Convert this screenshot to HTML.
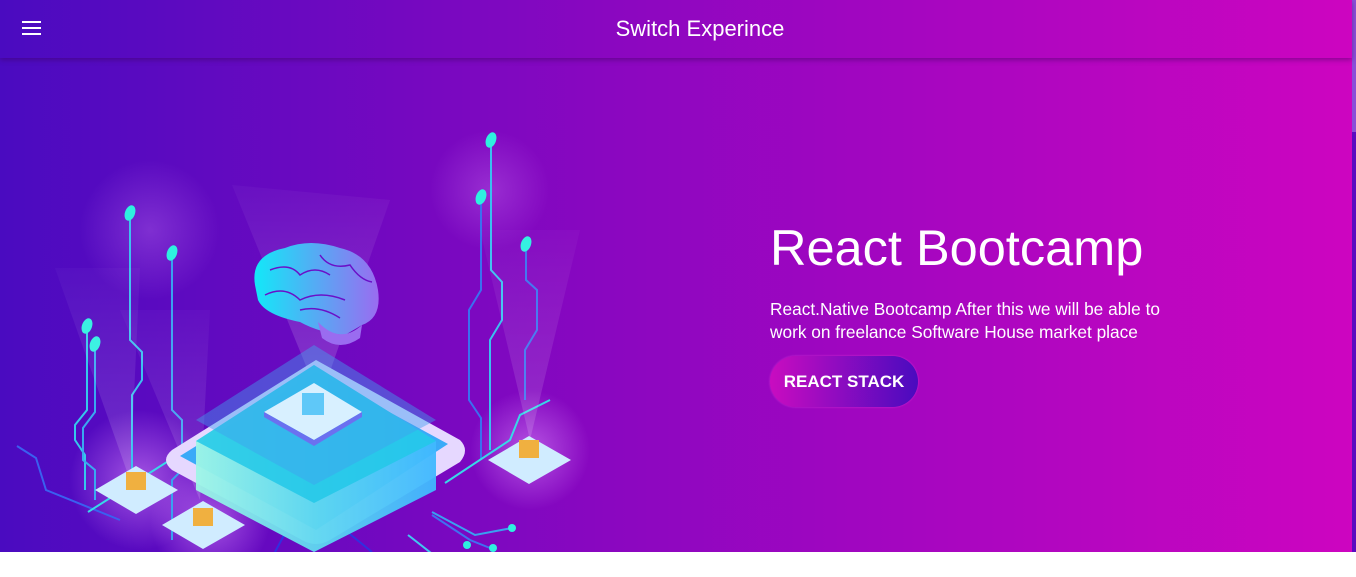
<!DOCTYPE html>
<html><head><meta charset="utf-8"><style>
html,body{margin:0;padding:0;width:1356px;height:577px;overflow:hidden;background:#fff;font-family:"Liberation Sans",Arial,sans-serif}
.hero{position:absolute;left:0;top:0;width:1352px;height:552px;background:linear-gradient(90deg,#4a0bc0 0%,#8a07c0 45%,#cd05c0 100%)}
.hdr{position:absolute;left:0;top:0;width:1352px;height:58px;background:linear-gradient(90deg,#4a0bc0 0%,#8a07c0 45%,#cd05c0 100%);box-shadow:0 2px 5px rgba(60,0,90,.45);z-index:2}
.hdr .t{position:absolute;left:0;width:1400px;text-align:center;top:16px;color:#fff;font-size:22px}
.ham{position:absolute;left:22px;top:21px;width:19px}
.ham i{display:block;height:2px;background:#fff;margin-bottom:4px}
.sb{position:absolute;left:1352px;top:0;width:4px;height:132px;background:#8a4fd8}
.sb2{position:absolute;left:1352px;top:132px;width:4px;height:420px;background:#5a0cc0}
h1{position:absolute;left:770px;top:220px;margin:0;color:#fff;font-weight:normal;font-size:50.5px;line-height:56px}
p{position:absolute;left:770px;top:298px;margin:0;color:#fff;font-size:17.3px;line-height:23px;width:430px}
.btn{position:absolute;left:770px;top:356px;width:148px;height:51px;border-radius:26px;background:linear-gradient(90deg,#c90cc0,#4a0bbf);color:#fff;font-weight:bold;font-size:17px;line-height:51px;text-align:center;box-shadow:0 0 2px rgba(255,80,230,.5)}
svg{position:absolute;left:0;top:0}
</style></head><body>
<div class="hero"></div>
<svg width="620" height="552" viewBox="0 0 620 552">
<defs>
<radialGradient id="glow"><stop offset="0" stop-color="#e090ff" stop-opacity=".55"/><stop offset="1" stop-color="#e090ff" stop-opacity="0"/></radialGradient>
<linearGradient id="brain" x1="0" y1="0" x2="1" y2="0"><stop offset="0" stop-color="#12e8f8"/><stop offset="1" stop-color="#9a6cf0"/></linearGradient>
<linearGradient id="side" x1="0" y1="0" x2="1" y2="0"><stop offset="0" stop-color="#9ef6e6"/><stop offset=".5" stop-color="#5fd8f0"/><stop offset="1" stop-color="#40b8ff"/></linearGradient>
<linearGradient id="cone" x1="0" y1="0" x2="0" y2="1"><stop offset="0" stop-color="#fff" stop-opacity=".05"/><stop offset="1" stop-color="#fff" stop-opacity=".3"/></linearGradient>
</defs>
<circle cx="150" cy="230" r="70" fill="url(#glow)" opacity=".5"/>
<circle cx="490" cy="190" r="60" fill="url(#glow)" opacity=".5"/>
<circle cx="140" cy="480" r="70" fill="url(#glow)"/>
<circle cx="530" cy="450" r="60" fill="url(#glow)"/>
<circle cx="210" cy="520" r="60" fill="url(#glow)"/>
<g stroke-width="2" fill="none">
<path d="M130 215 V340 L142 352 V380 L132 395 V480" stroke="#3dc0f0"/>
<path d="M172 255 V410 L182 420 V470 L172 480 V540" stroke="#3aa0f0"/>
<path d="M87 330 V410 L75 425 V440 L85 455 V490" stroke="#35c8ec"/>
<path d="M95 348 V412 L83 428 V460 L95 470 V500" stroke="#3aa8f0"/>
<path d="M17 446 L36 458 L46 490 L120 520" stroke="#3a60f0"/>
<path d="M88 512 L170 460 L200 474" stroke="#38d8e8"/>
<path d="M491 145 V270 L502 282 V320 L490 340 V450" stroke="#3ac0f0"/>
<path d="M481 200 V290 L469 310 V400 L481 418 V460" stroke="#3a70f0"/>
<path d="M526 248 V280 L537 290 V330 L525 350 V400" stroke="#3a70f0"/>
<path d="M445 483 L510 440 L520 415 L550 400" stroke="#38d8e8"/>
<path d="M432 515 L470 540 L490 548" stroke="#4070f0"/>
<path d="M408 535 L440 560" stroke="#40c8f0"/>
<path d="M432 512 L475 535 L512 528" stroke="#3aa0f0"/>
<path d="M290 524 L275 552" stroke="#3030e0"/>
<path d="M335 522 L372 552" stroke="#3030e0"/>
</g>
<g fill="#2ef0e0">
<ellipse cx="130" cy="213" rx="5" ry="8" transform="rotate(20 130 213)"/>
<ellipse cx="172" cy="253" rx="5" ry="8" transform="rotate(20 172 253)"/>
<ellipse cx="87" cy="326" rx="5" ry="8" transform="rotate(20 87 326)"/>
<ellipse cx="95" cy="344" rx="5" ry="8" transform="rotate(20 95 344)"/>
<ellipse cx="491" cy="140" rx="5" ry="8" transform="rotate(20 491 140)"/>
<ellipse cx="481" cy="197" rx="5" ry="8" transform="rotate(20 481 197)"/>
<ellipse cx="526" cy="244" rx="5" ry="8" transform="rotate(20 526 244)"/>
<circle cx="512" cy="528" r="4"/><circle cx="467" cy="545" r="4"/><circle cx="493" cy="548" r="4"/>
</g>
<polygon points="232,185 390,200 320,400" fill="url(#cone)" opacity=".6"/>
<polygon points="55,268 140,268 130,480" fill="url(#cone)" opacity=".5"/>
<polygon points="120,310 210,310 200,500" fill="url(#cone)" opacity=".5"/>
<polygon points="480,230 580,230 530,440" fill="url(#cone)" opacity=".5"/>
<path d="M316 360 L460 440 Q470 450 460 462 L330 540 Q316 548 302 540 L172 470 Q160 460 172 450 Z" fill="#e6d8ff"/>
<path d="M316 372 L448 444 L316 530 L180 456 Z" fill="#3aaaf8"/>
<path d="M196 441 L314 365 L436 441 V490 L314 552 L196 490 Z" fill="url(#side)" opacity=".95"/>
<path d="M196 441 L314 365 L436 441 L314 503 Z" fill="#22c8e8" opacity=".85"/>
<path d="M196 420 L314 345 L436 420 L314 485 Z" fill="#40a0f0" opacity=".45"/>
<path d="M264 412 L314 383 L362 412 L314 440 Z" fill="#d8f0ff"/>
<path d="M264 412 L314 440 L362 412 V417 L314 446 L264 417 Z" fill="#6b70f0"/>
<rect x="302" y="393" width="22" height="22" fill="#5fc8f8"/>
<g>
<path d="M95 490 L136 466 L178 490 L136 514 Z" fill="#d0ecff"/><rect x="126" y="472" width="20" height="18" fill="#f0b040"/>
<path d="M162 525 L203 501 L245 525 L203 549 Z" fill="#d0ecff"/><rect x="193" y="508" width="20" height="18" fill="#f0b040"/>
<path d="M488 460 L529 436 L571 460 L529 484 Z" fill="#d0ecff"/><rect x="519" y="440" width="20" height="18" fill="#f0b040"/>
</g>
<path d="M255 285 Q250 255 285 248 Q310 238 340 248 Q372 255 378 290 Q382 318 362 325 L345 335 Q320 333 300 322 Q265 315 258 300 Z" fill="url(#brain)"/>
<path d="M318 322 Q340 345 362 325 L360 338 Q340 352 322 338 Z" fill="#9a6cf0"/>
<g stroke="#6a10c8" stroke-width="1.5" fill="none"><path d="M270 270 Q290 262 300 275 Q315 265 330 275"/><path d="M265 295 Q285 285 300 300 Q320 290 345 300"/><path d="M320 255 Q330 270 350 265 Q360 280 372 282"/><path d="M300 310 Q320 305 340 318"/></g>
</svg>
<div class="hdr"><div class="ham"><i></i><i></i><i></i></div><div class="t">Switch Experince</div></div>
<div class="sb"></div><div class="sb2"></div>
<h1>React Bootcamp</h1>
<p>React.Native Bootcamp After this we will be able to work on freelance Software House market place</p>
<div class="btn">REACT STACK</div>
</body></html>
